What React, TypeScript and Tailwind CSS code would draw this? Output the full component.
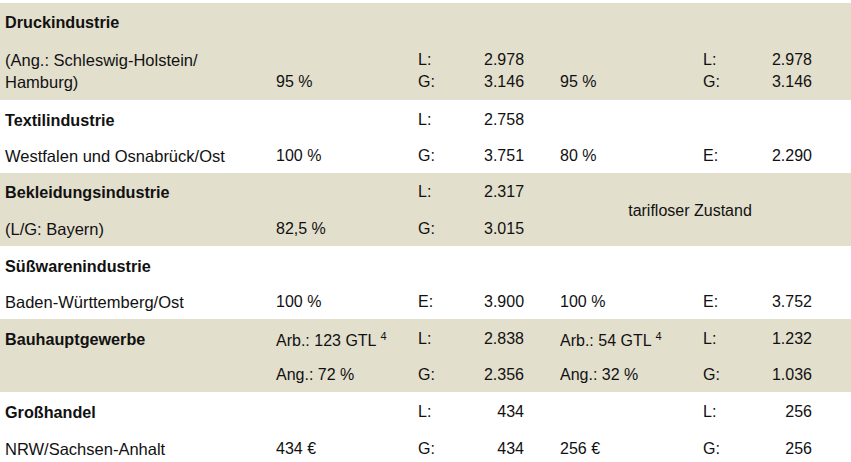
import React from "react";

const GRID = "grid grid-cols-[271px_142px_52px_90px_143px_55px_54px] items-center pl-[5px]";

function Band({ bg, rows, children }: { bg: boolean; rows: string; children: React.ReactNode }) {
  return <div className={`${GRID} ${rows} ${bg ? "bg-[#e3dfcd]" : "bg-white"}`}>{children}</div>;
}

// single cell, may hold several lines
function C({ lines, className = "" }: { lines?: string[]; className?: string }) {
  return (
    <div className={`pt-[2px] ${className}`}>
      {(lines ?? [""]).map((l, i) => (
        <div key={i} className="leading-[22px] h-[22px] whitespace-nowrap">
          {l}
        </div>
      ))}
    </div>
  );
}

const lab = "text-[16.5px]";
const head = "font-bold text-[16.2px]";
const num = "text-right pr-9";
const num2 = "text-right";

function Arb({ text }: { text: string }) {
  return (
    <div className="leading-[22px] whitespace-nowrap pt-[2px]">
      {text}
      <span className="text-[11px] ml-[4px] align-[6px]">4</span>
    </div>
  );
}

export default function App() {
  return (
    <div
      className="w-[851px] h-[462px] overflow-hidden bg-white pt-[3px] text-[16px] text-[#111111]"
      style={{ fontFamily: '"Liberation Sans", Arial, sans-serif' }}
    >
      {/* Druckindustrie */}
      <Band bg rows="grid-rows-[36px_61px]">
        <C lines={["Druckindustrie"]} className={head} />
        <C />
        <C />
        <C />
        <C />
        <C />
        <C />
        <C lines={["(Ang.: Schleswig-Holstein/", "Hamburg)"]} className={lab} />
        <C lines={["", "95 %"]} />
        <C lines={["L:", "G:"]} />
        <C lines={["2.978", "3.146"]} className="pl-[14px]" />
        <C lines={["", "95 %"]} />
        <C lines={["L:", "G:"]} />
        <C lines={["2.978", "3.146"]} className={num2} />
      </Band>

      {/* Textilindustrie */}
      <Band bg={false} rows="grid-rows-[37px_36px]">
        <C lines={["Textilindustrie"]} className={head} />
        <C />
        <C lines={["L:"]} />
        <C lines={["2.758"]} className="pl-[14px]" />
        <C />
        <C />
        <C />
        <C lines={["Westfalen und Osnabrück/Ost"]} className={lab} />
        <C lines={["100 %"]} />
        <C lines={["G:"]} />
        <C lines={["3.751"]} className="pl-[14px]" />
        <C lines={["80 %"]} />
        <C lines={["E:"]} />
        <C lines={["2.290"]} className={num2} />
      </Band>

      {/* Bekleidungsindustrie */}
      <Band bg rows="grid-rows-[36px_37px]">
        <C lines={["Bekleidungsindustrie"]} className={head} />
        <C />
        <C lines={["L:"]} />
        <C lines={["2.317"]} className="pl-[14px]" />
        <div className="col-start-5 col-span-3 row-span-2 text-center pl-[8px] pt-[2px] leading-[22px]">
          tarifloser Zustand
        </div>
        <C lines={["(L/G: Bayern)"]} className={lab} />
        <C lines={["82,5 %"]} />
        <C lines={["G:"]} />
        <C lines={["3.015"]} className="pl-[14px]" />
      </Band>

      {/* Süßwarenindustrie */}
      <Band bg={false} rows="grid-rows-[37px_36px]">
        <C lines={["Süßwarenindustrie"]} className={head} />
        <C />
        <C />
        <C />
        <C />
        <C />
        <C />
        <C lines={["Baden-Württemberg/Ost"]} className={lab} />
        <C lines={["100 %"]} />
        <C lines={["E:"]} />
        <C lines={["3.900"]} className="pl-[14px]" />
        <C lines={["100 %"]} />
        <C lines={["E:"]} />
        <C lines={["3.752"]} className={num2} />
      </Band>

      {/* Bauhauptgewerbe */}
      <Band bg rows="grid-rows-[37px_36px]">
        <C lines={["Bauhauptgewerbe"]} className={head} />
        <Arb text="Arb.: 123 GTL" />
        <C lines={["L:"]} />
        <C lines={["2.838"]} className={num} />
        <Arb text="Arb.: 54 GTL" />
        <C lines={["L:"]} />
        <C lines={["1.232"]} className={num2} />
        <C />
        <C lines={["Ang.: 72 %"]} />
        <C lines={["G:"]} />
        <C lines={["2.356"]} className={num} />
        <C lines={["Ang.: 32 %"]} />
        <C lines={["G:"]} />
        <C lines={["1.036"]} className={num2} />
      </Band>

      {/* Großhandel */}
      <Band bg={false} rows="grid-rows-[37px_37px]">
        <C lines={["Großhandel"]} className={head} />
        <C />
        <C lines={["L:"]} />
        <C lines={["434"]} className={num} />
        <C />
        <C lines={["L:"]} />
        <C lines={["256"]} className={num2} />
        <C lines={["NRW/Sachsen-Anhalt"]} className={lab} />
        <C lines={["434 €"]} />
        <C lines={["G:"]} />
        <C lines={["434"]} className={num} />
        <C lines={["256 €"]} />
        <C lines={["G:"]} />
        <C lines={["256"]} className={num2} />
      </Band>
    </div>
  );
}
